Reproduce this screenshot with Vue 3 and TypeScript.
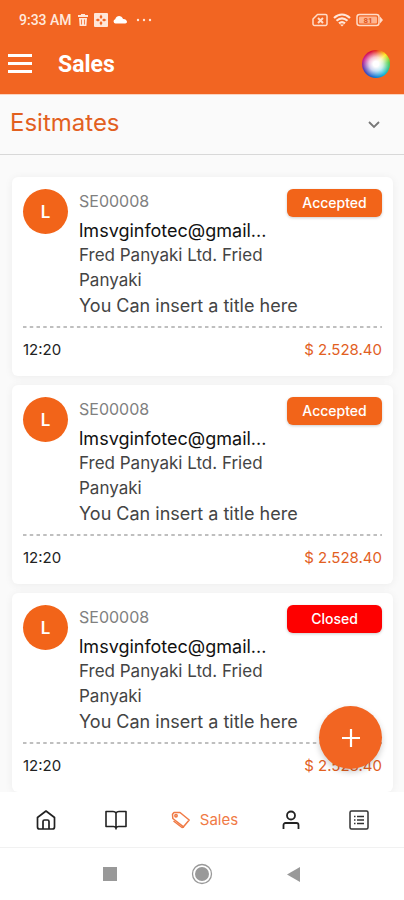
<script setup lang="ts">
import { ref } from 'vue'

interface Estimate {
  id: number
  code: string
  email: string
  company: string
  title: string
  time: string
  amount: string
  status: 'Accepted' | 'Closed'
}

const section = ref('Esitmates')

const base = {
  code: 'SE00008',
  email: 'lmsvginfotec@gmail...',
  company: 'Fred Panyaki Ltd. Fried Panyaki',
  title: 'You Can insert a title here',
  time: '12:20',
  amount: '$ 2.528.40',
}

const estimates: Estimate[] = [
  { id: 1, ...base, status: 'Accepted' },
  { id: 2, ...base, status: 'Accepted' },
  { id: 3, ...base, status: 'Closed' },
]
</script>

<template>
  <div class="screen">
    <header class="top">
      <div class="status">
        <span class="clock">9:33 AM</span>
        <svg width="12" height="14" viewBox="0 0 12 14" fill="#ffe6d8">
          <path d="M4 1h4v1h3v2H1V2h3zM2 5h8l-.6 8H2.600z" />
          <path d="M4.500 6.500v5M7.500 6.500v5" stroke="#f26522" stroke-width=".8" />
        </svg>
        <svg width="14" height="14" viewBox="0 0 14 14">
          <rect width="14" height="14" rx="1" fill="#ffe6d8" />
          <path d="M7 1.500 8.500 4 7 6 5.500 4zM7 12.500 5.500 10 7 8l1.500 2zM1.500 7 4 5.500 6 7 4 8.500zM12.500 7 10 8.500 8 7l2-1.500z" fill="#f26522" />
        </svg>
        <svg width="14" height="14" viewBox="0 0 14 14" fill="#fff">
          <path d="M2.500 10.500a2.200 2.200 0 0 1-.3-4.300C3 3.800 5 2.800 6.900 3.200 8.600 3.500 9.600 4.600 10 6c2.200-.2 3.700 1 4 2.700.1 1.200-.7 1.800-1.700 1.800z" />
        </svg>
        <svg class="more" width="16" height="14" viewBox="0 0 16 14" fill="#ffe6d8">
          <circle cx="2" cy="7" r="1.200" /><circle cx="8" cy="7" r="1.200" /><circle cx="14" cy="7" r="1.200" />
        </svg>
        <span class="spacer"></span>
        <svg width="16" height="14" viewBox="0 0 16 14" fill="none" stroke="#ffdcc8" stroke-width="1.500">
          <path d="M5.500 1.500h8a1.500 1.500 0 0 1 1.500 1.500v8a1.500 1.500 0 0 1-1.500 1.500h-11A1.500 1.500 0 0 1 1 11V6z" stroke-linejoin="round" />
          <path d="m6 5 5 5M11 5l-5 5" stroke-width="2" />
        </svg>
        <svg width="18" height="14" viewBox="0 0 18 14" fill="none" stroke="#ffe6d8" stroke-width="2.200">
          <path d="M1 5c5-4.500 11-4.500 16 0M3.500 7.800c3.400-3 7.600-3 11 0M6 10.300c2-1.700 4-1.700 6 0" />
          <path d="M7 11.500h4L9 13.500z" fill="#ffe6d8" stroke="none" />
        </svg>
        <svg width="28" height="14" viewBox="0 0 28 14">
          <rect x="1" y="1.500" width="22" height="11" rx="2.500" fill="none" stroke="#ffdcc8" stroke-width="1.500" />
          <path d="M24 3.500 27 7l-3 3.500z" fill="#ffdcc8" />
          <rect x="3" y="3.500" width="18" height="7" rx="1" fill="#ffb48e" />
          <text x="12" y="10" text-anchor="middle" class="charge">81</text>
        </svg>
      </div>
      <div class="appbar">
        <button class="menu" type="button" aria-label="Menu">
          <svg width="24" height="20" viewBox="0 0 24 20" fill="#fff">
            <path d="M0 0h24v3H0zM0 8h24v3H0zM0 16h24v3H0z" />
          </svg>
        </button>
        <h1>Sales</h1>
        <button class="wheel" type="button" aria-label="Theme colour"></button>
      </div>
    </header>

    <div class="selector">
      <select v-model="section" aria-label="Section">
        <option>Esitmates</option>
      </select>
      <svg class="chevron" width="12" height="8" viewBox="0 0 12 8" fill="none" stroke="#777" stroke-width="1.800">
        <path d="m1 1 5 5 5-5" />
      </svg>
    </div>

    <main class="content">
      <ul class="list">
        <li v-for="item in estimates" :key="item.id" class="card">
          <div class="body">
            <span class="avatar">L</span>
            <div class="info">
              <p class="code">{{ item.code }}</p>
              <p class="email">{{ item.email }}</p>
              <p class="company">{{ item.company }}</p>
              <p class="title">{{ item.title }}</p>
            </div>
            <span class="badge" :class="{ closed: item.status === 'Closed' }">{{ item.status }}</span>
          </div>
          <svg class="rule" width="100%" height="2">
            <line x1="0" y1="1" x2="100%" y2="1" stroke="#aaa" stroke-width="1.600" stroke-dasharray="3.500 3.240" />
          </svg>
          <div class="foot">
            <span>{{ item.time }}</span>
            <span class="amount">{{ item.amount }}</span>
          </div>
        </li>
      </ul>
      <button class="fab" type="button" aria-label="Add">
        <svg width="18" height="18" viewBox="0 0 18 18" stroke="#fff" stroke-width="2.200">
          <path d="M9 0v18M0 9h18" />
        </svg>
      </button>
    </main>

    <nav class="tabs">
      <a href="#home" aria-label="Home">
        <svg width="20" height="20" viewBox="0 0 20 20" fill="none" stroke="#222" stroke-width="1.700" stroke-linejoin="round">
          <path d="M1.500 7.500 10 1l8.500 6.500V17a2 2 0 0 1-2 2h-13a2 2 0 0 1-2-2z" />
          <path d="M7 19v-7.500a1.500 1.500 0 0 1 1.500-1.500h3a1.500 1.500 0 0 1 1.500 1.500V19" />
        </svg>
      </a>
      <a href="#catalog" aria-label="Catalog">
        <svg width="22" height="20" viewBox="0 0 22 20" fill="none" stroke="#222" stroke-width="1.600" stroke-linejoin="round">
          <path d="M11 3c-.6-1-1.500-1.500-3-1.500H1v15h7.500c1.300 0 2 .5 2.500 1.700.5-1.200 1.200-1.700 2.500-1.700H21v-15h-7c-1.500 0-2.400.5-3 1.500zM11 3v16.500" />
        </svg>
      </a>
      <a href="#sales" class="active">
        <svg width="20" height="18" viewBox="0 0 20 18" fill="none" stroke="#f07a45" stroke-width="1.500" stroke-linejoin="round">
          <path d="M1.500 3.200 3 1.500h6L18.200 9 12.500 15.800 1.800 7.500z" />
          <path d="M6.500 4.500 14 10.500" stroke="none" />
          <path d="M2.500 10l8.500 6.500 2-.5" />
          <circle cx="5" cy="4.800" r="1.200" />
        </svg>
        <span>Sales</span>
      </a>
      <a href="#customers" aria-label="Customers">
        <svg width="18" height="20" viewBox="0 0 18 20" fill="none" stroke="#222" stroke-width="1.800">
          <circle cx="9" cy="5.500" r="4" />
          <path d="M1.500 19v-4a2 2 0 0 1 2-2h11a2 2 0 0 1 2 2v4" />
        </svg>
      </a>
      <a href="#reports" aria-label="Reports">
        <svg width="20" height="20" viewBox="0 0 20 20" fill="none" stroke="#333" stroke-width="1.500">
          <rect x="1" y="1" width="18" height="18" rx="1.500" />
          <path d="M8 6.500h7M8 10h7M8 13.500h7M5 6.500h1.500M5 10h1.500M5 13.500h1.500" />
        </svg>
      </a>
    </nav>

    <div class="system">
      <button type="button" aria-label="Recent apps">
        <svg width="22" height="22" viewBox="0 0 22 22"><rect x="4" y="4" width="14" height="14" fill="#999" /></svg>
      </button>
      <button type="button" aria-label="Home screen">
        <svg width="22" height="22" viewBox="0 0 22 22">
          <circle cx="11" cy="11" r="9.500" fill="none" stroke="#999" stroke-width="1.300" />
          <circle cx="11" cy="11" r="7" fill="#999" />
        </svg>
      </button>
      <button type="button" aria-label="Back">
        <svg width="22" height="22" viewBox="0 0 22 22"><path d="M17 4v15L4 11.500z" fill="#999" /></svg>
      </button>
    </div>
  </div>
</template>

<style>
body {
  background: #fff;
}
</style>

<style scoped>
.screen {
  display: flex;
  flex-direction: column;
  height: 100vh;
  font-family: Inter, 'Open Sans', sans-serif;
  color: #222;
  background: #fafafa;
}
button {
  padding: 0;
  border: 0;
  background: none;
  display: grid;
  place-items: center;
}
svg {
  display: block;
}
h1,
p,
ul {
  margin: 0;
  padding: 0;
}
.top {
  background: #f26522;
  color: #fff;
  font-family: Roboto, sans-serif;
  border-bottom: 1px solid #fbd3bf;
}
.status {
  display: flex;
  align-items: center;
  gap: 5px;
  height: 28px;
  padding: 6px 20px 0 19px;
}
.clock {
  font-size: 14px;
  font-weight: 500;
  color: #ffe9dd;
}
.more {
  margin-left: 4px;
}
.spacer {
  flex: 1;
}
.charge {
  font: 700 8px Roboto, sans-serif;
  fill: #e0561a;
}
.appbar {
  display: flex;
  align-items: center;
  height: 60px;
  padding: 0 14px 0 8px;
}
h1 {
  flex: 1;
  margin-left: 26px;
  font-size: 23px;
  font-weight: 700;
}
.wheel {
  width: 28px;
  height: 28px;
  border-radius: 50%;
  background:
    radial-gradient(circle closest-side, #fff 20%, rgba(255, 255, 255, 0.75) 50%, rgba(255, 255, 255, 0) 95%),
    conic-gradient(#e83020, #ffe820 45deg, #50d050 85deg, #10b8d8 140deg, #1070d0 190deg, #5040b8 240deg, #c82090 290deg, #d81040 335deg, #e83020);
}
.selector {
  display: grid;
  align-items: center;
  height: 59px;
  border-bottom: 1px solid #d8d8d8;
}
.selector > * {
  grid-area: 1 / 1;
}
select {
  appearance: none;
  width: 100%;
  height: 100%;
  padding: 0 40px 5px 10px;
  border: 0;
  background: none;
  font-family: inherit;
  font-size: 24px;
  color: #e2601f;
}
.chevron {
  justify-self: end;
  margin-right: 24px;
  pointer-events: none;
}
.content {
  position: relative;
  flex: 1;
  min-height: 0;
  display: flex;
}
.list {
  flex: 1;
  min-width: 0;
  overflow: hidden;
  list-style: none;
  padding: 22px 11px 0 12px;
}
.card {
  margin-bottom: 9px;
  padding: 12px 11px 14px;
  border-radius: 6px;
  background: #fff;
  box-shadow: 0 1px 8px rgba(0, 0, 0, 0.06);
}
.body {
  display: flex;
  align-items: flex-start;
}
.avatar {
  display: grid;
  place-items: center;
  width: 45px;
  height: 45px;
  border-radius: 50%;
  background: #f26419;
  color: #fff;
  font-size: 17px;
  font-weight: 600;
}
.info {
  flex: 1;
  min-width: 0;
  margin-left: 11px;
  font-size: 18px;
  line-height: 25px;
  color: #444;
}
.info p {
  white-space: nowrap;
}
.info .code {
  margin-bottom: 4px;
  font-size: 16px;
  color: #808080;
}
.info .email {
  color: #111;
}
.info .company {
  font-size: 17px;
  white-space: normal;
}
.badge {
  width: 95px;
  border-radius: 6px;
  background: #f26419;
  color: #fff;
  font-size: 14px;
  font-weight: 500;
  line-height: 28px;
  text-align: center;
  box-shadow: 0 1px 3px rgba(0, 0, 0, 0.2);
}
.badge.closed {
  background: #fe0000;
}
.rule {
  margin-top: 8px;
}
.foot {
  display: flex;
  justify-content: space-between;
  margin-top: 10px;
  font-size: 15px;
  line-height: 24px;
}
.amount {
  color: #e2601f;
}
.fab {
  position: absolute;
  right: 22px;
  bottom: 23px;
  width: 63px;
  height: 63px;
  border-radius: 50%;
  background: #f26522;
  box-shadow: 0 3px 6px rgba(0, 0, 0, 0.2);
}
.tabs {
  display: flex;
  align-items: center;
  justify-content: space-between;
  height: 55px;
  padding: 0 35px 0 36px;
  background: #fff;
}
.tabs a {
  text-decoration: none;
}
.tabs .active {
  display: flex;
  align-items: center;
  gap: 9px;
  margin: 0 -5px;
  font-size: 15px;
  color: #f07a45;
}
.system {
  display: flex;
  align-items: center;
  justify-content: center;
  gap: 70px;
  height: 52px;
  border-top: 1px solid #f1f1f1;
  background: #fff;
}
</style>
